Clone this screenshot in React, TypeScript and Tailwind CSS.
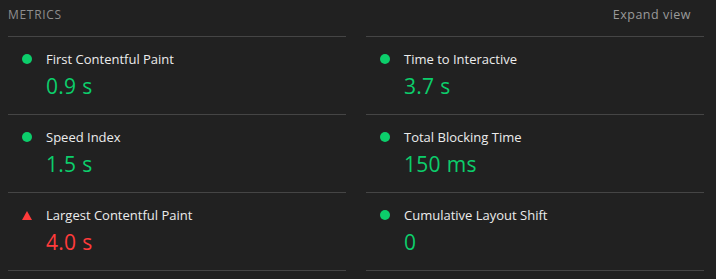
import React from "react";

type Metric = {
  label: string;
  value: string;
  status: "pass" | "fail";
};

const metrics: Metric[] = [
  { label: "First Contentful Paint", value: "0.9 s", status: "pass" },
  { label: "Time to Interactive", value: "3.7 s", status: "pass" },
  { label: "Speed Index", value: "1.5 s", status: "pass" },
  { label: "Total Blocking Time", value: "150 ms", status: "pass" },
  { label: "Largest Contentful Paint", value: "4.0 s", status: "fail" },
  { label: "Cumulative Layout Shift", value: "0", status: "pass" },
];

function StatusIcon({ status }: { status: Metric["status"] }) {
  if (status === "fail") {
    return (
      <svg width="10" height="9" viewBox="0 0 10 9" className="block">
        <polygon points="5,0 10,9 0,9" fill="#ff3b3b" />
      </svg>
    );
  }
  return <span className="block w-[10px] h-[10px] rounded-full bg-[#0cce6b]" />;
}

function MetricCell({ metric }: { metric: Metric }) {
  const valueColor = metric.status === "fail" ? "text-[#ff3b3b]" : "text-[#0cce6b]";
  return (
    <div className="h-[78px] border-b border-[#454545] flex">
      <div className="w-[38px] pl-[14px] pt-[17px] flex items-start">
        <div className="h-[10px] flex items-center">
          <StatusIcon status={metric.status} />
        </div>
      </div>
      <div className="flex flex-col pt-[13px]">
        <div className="text-[13px] leading-[18px] text-[#ececec]">{metric.label}</div>
        <div className={`text-[21px] leading-[28px] mt-[4px] tracking-[0.3px] ${valueColor}`}>
          {metric.value}
        </div>
      </div>
    </div>
  );
}

export default function App() {
  return (
    <div
      className="w-[716px] h-[279px] bg-[#212121] pl-2 pr-3 overflow-hidden"
      style={{ fontFamily: '"Open Sans", "Noto Sans", sans-serif' }}
    >
      <div className="grid grid-cols-2 gap-x-5">
        <div className="h-[37px] border-b border-[#454545] flex items-center pb-[6px]">
          <span className="text-[12px] tracking-[0.7px] text-[#8e8e8e]">METRICS</span>
        </div>
        <div className="h-[37px] border-b border-[#454545] flex items-center justify-end pb-[6px] pr-[13px]">
          <span className="text-[12.5px] tracking-[0.5px] text-[#9a9a9a]">Expand view</span>
        </div>
        {metrics.map((m) => (
          <MetricCell key={m.label} metric={m} />
        ))}
      </div>
    </div>
  );
}
